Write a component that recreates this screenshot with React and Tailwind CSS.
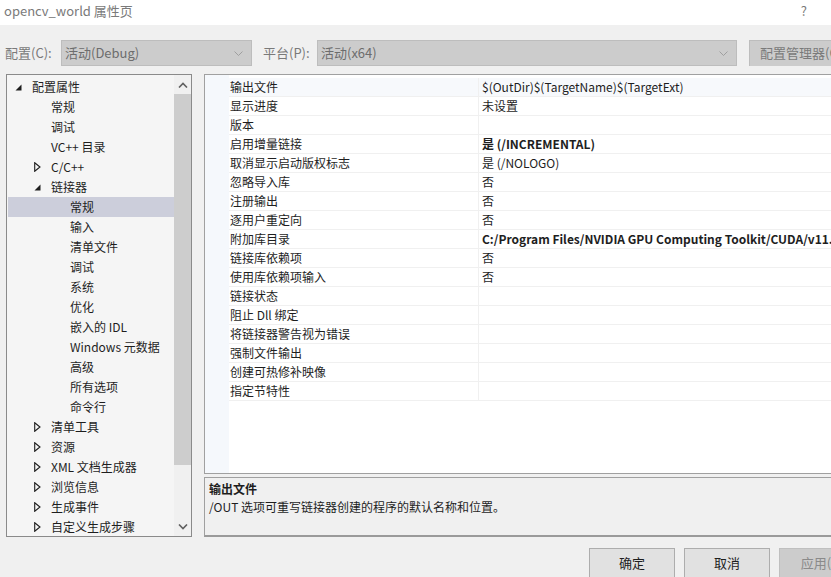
import React from "react";

const FONT = { fontFamily: '"Noto Sans CJK SC", "Noto Sans", sans-serif' };

const tree = [
  { label: "配置属性", level: 0, icon: "open" },
  { label: "常规", level: 1 },
  { label: "调试", level: 1 },
  { label: "VC++ 目录", level: 1 },
  { label: "C/C++", level: 1, icon: "closed" },
  { label: "链接器", level: 1, icon: "open" },
  { label: "常规", level: 2, selected: true },
  { label: "输入", level: 2 },
  { label: "清单文件", level: 2 },
  { label: "调试", level: 2 },
  { label: "系统", level: 2 },
  { label: "优化", level: 2 },
  { label: "嵌入的 IDL", level: 2 },
  { label: "Windows 元数据", level: 2 },
  { label: "高级", level: 2 },
  { label: "所有选项", level: 2 },
  { label: "命令行", level: 2 },
  { label: "清单工具", level: 1, icon: "closed" },
  { label: "资源", level: 1, icon: "closed" },
  { label: "XML 文档生成器", level: 1, icon: "closed" },
  { label: "浏览信息", level: 1, icon: "closed" },
  { label: "生成事件", level: 1, icon: "closed" },
  { label: "自定义生成步骤", level: 1, icon: "closed" },
];

const props = [
  ["输出文件", "$(OutDir)$(TargetName)$(TargetExt)"],
  ["显示进度", "未设置"],
  ["版本", ""],
  ["启用增量链接", "是 (/INCREMENTAL)", true],
  ["取消显示启动版权标志", "是 (/NOLOGO)"],
  ["忽略导入库", "否"],
  ["注册输出", "否"],
  ["逐用户重定向", "否"],
  ["附加库目录", "C:/Program Files/NVIDIA GPU Computing Toolkit/CUDA/v11.8/lib/x64", true],
  ["链接库依赖项", "否"],
  ["使用库依赖项输入", "否"],
  ["链接状态", ""],
  ["阻止 Dll 绑定", ""],
  ["将链接器警告视为错误", ""],
  ["强制文件输出", ""],
  ["创建可热修补映像", ""],
  ["指定节特性", ""],
];

function Chevron({ up }) {
  return (
    <svg width="10" height="6" viewBox="0 0 10 6">
      <path
        d={up ? "M1 5.5 L5 1.5 L9 5.5" : "M1 0.5 L5 4.5 L9 0.5"}
        fill="none"
        stroke="#606060"
        strokeWidth="1.6"
      />
    </svg>
  );
}

function Arrow({ type }) {
  if (type === "open") {
    return (
      <svg width="7" height="7" viewBox="0 0 7 7">
        <polygon points="6.5,0.5 6.5,6.5 0.5,6.5" fill="#1e1e1e" />
      </svg>
    );
  }
  return (
    <svg width="7" height="10" viewBox="0 0 7 10">
      <polygon points="0.7,0.7 6,5 0.7,9.3" fill="none" stroke="#1e1e1e" strokeWidth="1.1" />
    </svg>
  );
}

function Select({ value, width }) {
  return (
    <div
      className="h-[26px] shrink-0 flex items-center justify-between bg-[#cccccc] border border-[#bdbdbd] pl-[3px] pr-[8px] text-[13px] text-[#6d6d6d]"
      style={{ width }}
    >
      <span>{value}</span>
      <svg width="9" height="5" viewBox="0 0 9 5">
        <path d="M0.5 0.5 L4.5 4.5 L8.5 0.5" fill="none" stroke="#9a9a9a" strokeWidth="0.9" />
      </svg>
    </div>
  );
}

export default function App() {
  return (
    <div className="w-[831px] h-[577px] overflow-hidden bg-[#f0f0f0] text-[#1e1e1e]" style={FONT}>
      {/* title bar */}
      <div className="h-[25px] bg-white flex items-center justify-between pl-[4px] pr-[24px] text-[13px] text-[#7a7a7a]">
        <span className="-mt-[4px]">opencv_world 属性页</span>
        <span className="-mt-[4px] text-[13px]">?</span>
      </div>

      {/* config row */}
      <div className="mt-[15px] h-[26px] flex items-center text-[13px] text-[#7a7a7a] overflow-hidden">
        <span className="pl-[5px] w-[61px] shrink-0">配置(C):</span>
        <Select value="活动(Debug)" width={191} />
        <span className="ml-[11px] w-[54px] shrink-0">平台(P):</span>
        <Select value="活动(x64)" width={420} />
        <div className="ml-[12px] h-[27px] w-[100px] shrink-0 flex items-center bg-[#cccccc] border border-[#bdbdbd] pl-[10px] whitespace-nowrap">
          配置管理器(O)
        </div>
      </div>

      {/* main */}
      <div className="mt-[8px] flex pl-[6px]">
        {/* tree */}
        <div className="w-[186px] h-[463px] shrink-0 border border-[#8a8a8a] bg-[#f5f5f5] flex">
          <div className="flex-1 pt-[2px] pl-[1px] text-[12px] leading-[20px]">
            {tree.map((t, i) => (
              <div
                key={i}
                className={`h-[20px] flex items-center whitespace-nowrap ${t.selected ? "bg-[#cccedb]" : ""}`}
              >
                <div
                  className="flex justify-end items-center shrink-0"
                  style={{ width: 22 + t.level * 19 }}
                >
                  {t.icon && (
                    <span className="mr-[8px] flex items-center">
                      <Arrow type={t.icon} />
                    </span>
                  )}
                </div>
                <span className="pl-[2px]">{t.label}</span>
              </div>
            ))}
          </div>
          {/* scrollbar */}
          <div className="w-[17px] shrink-0 bg-[#f0f0f0] flex flex-col items-center">
            <div className="h-[19px] w-full flex items-center justify-center">
              <Chevron up />
            </div>
            <div className="w-full h-[371px] bg-[#cdcdcd]"></div>
            <div className="flex-1"></div>
            <div className="h-[19px] w-full flex items-center justify-center">
              <Chevron />
            </div>
          </div>
        </div>

        {/* right */}
        <div className="ml-[12px] w-[640px] shrink-0 flex flex-col">
          <div className="h-[400px] border border-[#a0a0a0] bg-white flex text-[12px]">
            <div className="w-[24px] shrink-0 bg-[#f5f8fc]"></div>
            <div className="flex-1 flex flex-col pt-[3px]">
              {props.map(([k, v, bold], i) => (
                <div
                  key={i}
                  className={`h-[19px] flex items-center border-b border-[#f0f0f0] whitespace-nowrap ${i === 0 ? "bg-[#f7f9fc]" : ""}`}
                >
                  <div className="w-[250px] h-full shrink-0 flex items-center pl-[1px] border-r border-[#f0f0f0]">
                    {k}
                  </div>
                  <div className={`pl-[3px] overflow-hidden ${bold ? "font-bold" : ""}`}>{v}</div>
                </div>
              ))}
            </div>
          </div>
          <div className="mt-[3px] h-[60px] border border-[#a0a0a0] border-b-2 border-b-[#9a9a9a] bg-[#f0f0f0] pl-[4px] pt-[2px] text-[12px] leading-[18px]">
            <div className="font-bold">输出文件</div>
            <div>/OUT 选项可重写链接器创建的程序的默认名称和位置。</div>
          </div>
        </div>
      </div>

      {/* buttons */}
      <div className="mt-[11px] flex pl-[589px] gap-[9px] text-[13px]">
        <div className="w-[86px] h-[30px] shrink-0 flex items-center justify-center bg-[#e1e1e1] border border-[#adadad]">
          确定
        </div>
        <div className="w-[86px] h-[30px] shrink-0 flex items-center justify-center bg-[#e1e1e1] border border-[#adadad]">
          取消
        </div>
        <div className="w-[86px] h-[30px] shrink-0 flex items-center justify-center bg-[#cccccc] border border-[#bfbfbf] text-[#8a8a8a] whitespace-nowrap">
          应用(A)
        </div>
      </div>
    </div>
  );
}
